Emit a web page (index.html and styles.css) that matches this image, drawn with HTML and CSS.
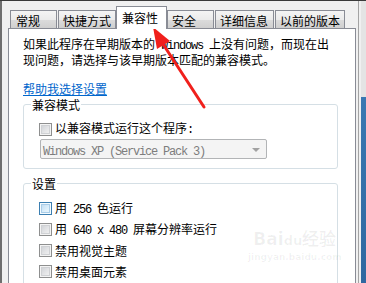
FILE: index.html
```html
<!DOCTYPE html>
<html lang="zh-CN">
<head>
    <meta charset="UTF-8">
    <title>兼容性</title>
    <link rel="stylesheet" href="styles.css">
</head>
<body>
    <div class="screen">
        <div class="dialog">
            <div class="tabs">
                <div class="tab t1">常规</div>
                <div class="tab t2">快捷方式</div>
                <div class="tab active">兼容性</div>
                <div class="tab t4">安全</div>
                <div class="tab t5">详细信息</div>
                <div class="tab t6">以前的版本</div>
            </div>

            <div class="panel">
                <p class="intro">如果此程序在早期版本的<span class="en"> Windows </span>上没有问题，而现在出<br>现问题，请选择与该早期版本匹配的兼容模式。</p>

                <a class="help" href="#">帮助我选择设置</a>

                <fieldset class="group mode">
                    <legend>兼容模式</legend>
                    <div class="row">
                        <span class="cb"></span>
                        <span>以兼容模式运行这个程序<span class="en">:</span></span>
                    </div>
                    <div class="select">
                        <span class="en">Windows XP (Service Pack 3)</span>
                        <span class="caret"></span>
                    </div>
                </fieldset>

                <fieldset class="group settings">
                    <legend>设置</legend>
                    <div class="row"><span class="cb hover"></span><span>用<span class="en"> 256 </span>色运行</span></div>
                    <div class="row"><span class="cb"></span><span>用<span class="en"> 640 x 480 </span>屏幕分辨率运行</span></div>
                    <div class="row"><span class="cb"></span><span>禁用视觉主题</span></div>
                    <div class="row"><span class="cb"></span><span>禁用桌面元素</span></div>
                </fieldset>
            </div>
        </div>
        <div class="edge"></div>

        <div class="watermark">
            <div class="wm-logo">Bai<span class="wm-du">du</span>经验</div>
            <div class="wm-url">jingyan.baidu.com</div>
        </div>

        <!-- 红色箭头指向“兼容性”标签 -->
        <svg class="arrow" width="366" height="283" viewBox="0 0 366 283">
            <line x1="204" y1="106" x2="161" y2="40" stroke="#f0201c" stroke-width="3" stroke-linecap="round"/>
            <polygon points="153,26 170,40 157,48" fill="#f0201c"/>
        </svg>
    </div>
</body>
</html>
```

FILE: styles.css
```css
body {
    margin: 0;
    background: #f0f0f0;
    font-family: "Noto Sans CJK SC", "Noto Sans", sans-serif;
    font-size: 12px;
    line-height: 13px;
    color: #000;
}

.screen {
    position: relative;
    display: flex;
    width: 366px;
    height: 283px;
    overflow: hidden;
    border-top: 1px solid #3a3a3a;
    box-sizing: border-box;
}

.dialog {
    flex: 0 0 358px;
    border-left: 2px solid #6e6e6e;
    padding-left: 6px;
    box-sizing: border-box;
}

.edge {
    flex: 1;
    border-left: 1px solid #a3a3a3;
    background:
        linear-gradient(to right, #f0f0f0 2px, transparent 2px),
        linear-gradient(to bottom, #e4e4e4 96px, #3a78b2 96px, #2f68a0);
}

.en {
    font-family: "Liberation Mono", monospace;
    letter-spacing: -1.2px;
}

/* 标签页 */
.tabs {
    display: flex;
    align-items: flex-end;
    padding-top: 5px;
    padding-left: 2px;
}

.tab {
    height: 18px;
    box-sizing: border-box;
    padding: 3px 0 0 4px;
    border: 1px solid #898c95;
    border-bottom: none;
    background: linear-gradient(to bottom, #f4f4f4 0%, #ebebeb 50%, #dcdcdc 51%, #cfcfcf 100%);
    white-space: nowrap;
}

.t1 { width: 47px; margin-right: 1px; padding-left: 5px; }
.t2 { width: 58px; }
.t4 { width: 47px; margin-right: 1px; }
.t5 { width: 59px; margin-right: 1px; }
.t6 { width: 70px; }

.tab.active {
    position: relative;
    z-index: 1;
    width: 51px;
    height: 23px;
    margin-bottom: -1px;
    padding-top: 4px;
    padding-left: 5px;
    background: #fff;
}

/* 内容面板 */
.panel {
    width: 348px;
    height: 260px;
    box-sizing: border-box;
    border: 1px solid #898c95;
    background: #fff;
    padding: 8px 17px 0 14px;
}

.intro {
    margin: 0;
}

.help {
    display: inline-block;
    margin-top: 16px;
    color: #0066cc;
    text-decoration: underline;
}

.group {
    margin: 3px 0 0;
    padding: 0 0 0 16px;
    border: 1px solid #d5dfe5;
    border-radius: 3px;
}

.group legend {
    margin-left: -9px;
    padding: 0 1px;
    line-height: 13px;
}

.mode {
    padding-top: 8px;
    padding-bottom: 9px;
}

.settings {
    margin-top: 8px;
    padding-top: 8px;
    height: 120px;
}

.row {
    display: flex;
    align-items: center;
    height: 21px;
    gap: 3px;
}

.mode .row {
    height: 20px;
    margin-left: -1px;
}

.settings .row {
    margin-left: -1px;
}

.cb {
    width: 13px;
    height: 13px;
    box-sizing: border-box;
    border: 1px solid #8e8f8f;
    background: linear-gradient(135deg, #c9ccd1 0%, #e4e5e7 55%, #f6f6f6 100%);
    box-shadow: inset 0 0 0 1px #f4f4f4, inset 0 0 0 2px #cfd1d4;
}

.cb.hover {
    border-color: #3c7fb1;
    background: linear-gradient(135deg, #b9d7ef 0%, #def0fb 60%, #eef8fd 100%);
    box-shadow: inset 0 0 0 1px #f4fbff, inset 0 0 0 2px #a9cde8;
}

.select {
    position: relative;
    width: 227px;
    height: 20px;
    box-sizing: border-box;
    border: 1px solid #b2b4b6;
    border-radius: 2px;
    background: #f4f4f4;
    color: #7d7d7d;
    padding: 3px 0 0 2px;
}

.caret {
    position: absolute;
    right: 6px;
    top: 8px;
    border-left: 4px solid transparent;
    border-right: 4px solid transparent;
    border-top: 4px solid #a2a2a2;
}

/* 水印与箭头叠层 */
.watermark {
    position: absolute;
    left: 248px;
    top: 228px;
    color: rgba(0, 0, 0, 0.06);
    font-family: "DejaVu Sans", sans-serif;
    text-align: center;
    pointer-events: none;
}

.wm-logo {
    font-size: 17px;
    font-weight: bold;
    line-height: 20px;
}

.wm-du {
    font-size: 13px;
}

.wm-url {
    font-size: 9px;
    line-height: 12px;
    font-weight: bold;
}

.arrow {
    position: absolute;
    left: 0;
    top: 0;
    pointer-events: none;
}
```
